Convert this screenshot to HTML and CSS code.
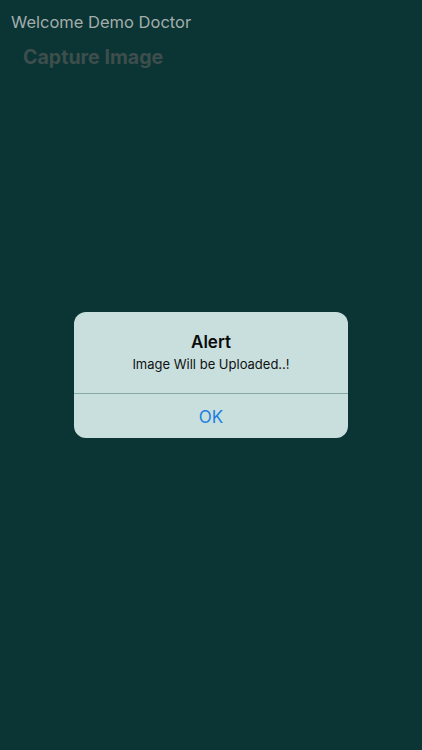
FILE: index.html
```html
<!DOCTYPE html>
<html lang="en">
<head>
    <meta charset="UTF-8">
    <meta name="viewport" content="width=device-width, initial-scale=1.0">
    <title>Capture Image</title>
    <link rel="stylesheet" href="styles.css">
</head>
<body>
    <header class="top">
        <p class="welcome">Welcome Demo Doctor</p>
        <h2 class="capture">Capture Image</h2>
    </header>

    <div class="overlay">
        <div class="alert">
            <div class="alert-body">
                <h3 class="alert-title">Alert</h3>
                <p class="alert-text">Image Will be Uploaded..!</p>
            </div>
            <button class="alert-btn">OK</button>
        </div>
    </div>
</body>
</html>
```

FILE: styles.css
```css
body {
    margin: 0;
    padding: 0;
    width: 422px;
    height: 750px;
    background-color: #0b3535;
    font-family: Inter, Roboto, "Liberation Sans", Arial, sans-serif;
    overflow: hidden;
}

.top {
    padding: 11px 11px 0;
}

.welcome {
    margin: 0;
    font-size: 16.5px;
    line-height: 22px;
    color: #a3adab;
}

.capture {
    margin: 12px 0 0 12px;
    font-size: 19.6px;
    line-height: 24px;
    font-weight: bold;
    color: #3d4e4c;
}

.overlay {
    position: absolute;
    top: 0;
    left: 0;
    width: 422px;
    height: 750px;
    display: flex;
    align-items: center;
    justify-content: center;
}

.alert {
    width: 274px;
    background-color: #c8dfde;
    border-radius: 12px;
    overflow: hidden;
    text-align: center;
}

.alert-body {
    padding: 19px 16px 18px;
    border-bottom: 1px solid #86aaa6;
}

.alert-title {
    margin: 0;
    font-size: 17px;
    line-height: 22px;
    font-weight: 600;
    color: #0a0a0a;
}

.alert-text {
    margin: 0;
    font-size: 13px;
    line-height: 22px;
    color: #111;
}

.alert-btn {
    display: block;
    width: 100%;
    height: 44px;
    padding: 2px 0 0;
    border: none;
    background: none;
    font-family: inherit;
    font-size: 17px;
    color: #1e7fdd;
}
```
